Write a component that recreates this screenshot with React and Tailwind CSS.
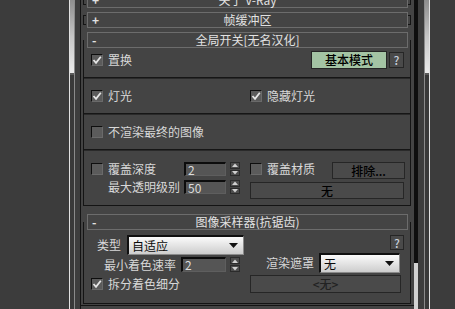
function Check({ on, className = "" }) {
  return (
    <span
      className={
        "flex h-[12px] w-[12px] shrink-0 items-center justify-center border border-t-[#0e0e0e] border-l-[#0e0e0e] border-b-[#6a6a6a] border-r-[#6a6a6a] bg-[#5b5b5b] " +
        className
      }
    >
      {on && (
        <svg width="10" height="10" viewBox="0 0 10 10">
          <path d="M1.5 5 L4 7.8 L8.8 1.8" fill="none" stroke="#e6e6e6" strokeWidth="1.8" />
        </svg>
      )}
    </span>
  );
}

function Field({ value, className = "" }) {
  return (
    <span
      className={
        "flex items-center border-t-2 border-l-2 border-b border-r border-t-[#0c0c0c] border-l-[#0c0c0c] border-b-[#5e5e5e] border-r-[#5e5e5e] bg-[#555555] pl-[2px] text-[12px] leading-none text-[#dcdcdc] " +
        className
      }
    >
      {value}
    </span>
  );
}

function Spin({ className = "" }) {
  return (
    <span className={"flex w-[10px] flex-col gap-[1px] " + className}>
      <span className="flex flex-1 items-center justify-center border border-[#2b2b2b] bg-[#4d4d4d]">
        <svg width="6" height="4" viewBox="0 0 6 4">
          <path d="M0 4 L3 0.5 L6 4 Z" fill="#d0d0d0" />
        </svg>
      </span>
      <span className="flex flex-1 items-center justify-center border border-[#2b2b2b] bg-[#4d4d4d]">
        <svg width="6" height="4" viewBox="0 0 6 4">
          <path d="M0 0 L3 3.5 L6 0 Z" fill="#d0d0d0" />
        </svg>
      </span>
    </span>
  );
}

function Btn({ children, className = "" }) {
  return (
    <span
      className={
        "flex items-center justify-center border border-[#262626] bg-[#4a4a4a] text-[12px] font-medium leading-none text-black " +
        className
      }
    >
      {children}
    </span>
  );
}

function Drop({ value, className = "" }) {
  return (
    <span
      className={
        "flex items-center border-t-2 border-l-2 border-b border-r border-t-[#101010] border-l-[#101010] border-b-[#8a8a8a] border-r-[#8a8a8a] bg-gradient-to-b from-[#fbfbfb] to-[#cdcdcd] pl-[3px] pr-[5px] text-[12px] leading-none text-[#0a0a0a] " +
        className
      }
    >
      <span className="flex-1">{value}</span>
      <svg width="9" height="5" viewBox="0 0 9 5">
        <path d="M0 0 L9 0 L4.5 5 Z" fill="#111" />
      </svg>
    </span>
  );
}

function Head({ sign, title }) {
  return (
    <div className="flex h-[16px] w-[321px] items-center border border-[#6c6c6c] bg-[#444444] text-[12px] leading-none text-[#e2e2e2]">
      <span className="w-[14px] pl-[4px] font-bold">{sign}</span>
      <span className="flex-1 pr-[14px] text-center">{title}</span>
    </div>
  );
}

function Closed({ title, className = "" }) {
  return (
    <div className={"ml-[2px] flex items-center " + className}>
      <span className="h-[10px] w-[3px] border-y border-l border-[#141414]" />
      <span className="w-[1px]" />
      <Head sign="+" title={title} />
      <span className="h-[10px] w-[3px] border-y border-r border-[#141414]" />
    </div>
  );
}

function Sep() {
  return <div className="h-[2px] border-t border-b border-t-[#161616] border-b-[#2a2a2a]" />;
}

function Thumb() {
  return (
    <div className="flex w-[4px] flex-col bg-[#393939]">
      <div className="h-[73px] bg-gradient-to-b from-[#8e8e8e] via-[#c6c6c6] to-[#ececec]" />
      <div className="h-[2px] bg-[#5a5a5a]" />
    </div>
  );
}

export default function App() {
  return (
    <div className="flex h-[309px] w-[455px] overflow-hidden bg-[#3c3c3c] font-['Noto_Sans_CJK_SC','Liberation_Sans',sans-serif] text-[12px] text-[#d8d8d8]">
      <div className="w-[69px] bg-[#3c3c3c]" />
      <div className="w-[1px] bg-[#e2e2e2]" />
      <Thumb />
      <div className="w-[1px] bg-[#8a8a8a]" />
      <div className="w-[5px] bg-[#3d3d3d]" />
      <div className="w-[1px] bg-[#141414]" />

      <div className="flex w-[333px] flex-col bg-[#444444]">
        <Closed title="关于 V-Ray" className="-mt-[8px]" />
        <Closed title="帧缓冲区" className="mt-[4px]" />

        <div className="ml-[2px] mt-[12px] w-[328px] border-x border-b border-[#141414] pb-[5px]">
          <div className="-mt-[8px] ml-[3px]">
            <Head sign="-" title="全局开关[无名汉化]" />
          </div>

          <div className="mt-[3px] flex h-[18px] items-center">
            <Check on className="ml-[7px]" />
            <span className="ml-[5px] leading-none">置换</span>
            <Btn className="ml-auto h-[18px] w-[76px] bg-[#a4c4a4]">基本模式</Btn>
            <Btn className="ml-[2px] h-[16px] w-[15px] !text-[#c8d0dc]">?</Btn>
            <span className="w-[6px]" />
          </div>
          <div className="mt-[8px]">
            <Sep />
          </div>

          <div className="mt-[8px] flex h-[18px] items-center">
            <div className="flex w-[166px] items-center">
              <Check on className="ml-[7px]" />
              <span className="ml-[5px] leading-none">灯光</span>
            </div>
            <Check on />
            <span className="ml-[5px] leading-none">隐藏灯光</span>
          </div>
          <div className="mt-[8px]">
            <Sep />
          </div>

          <div className="mt-[8px] flex h-[18px] items-center">
            <Check className="ml-[7px]" />
            <span className="ml-[5px] leading-none">不渲染最终的图像</span>
          </div>
          <div className="mt-[8px]">
            <Sep />
          </div>

          <div className="mt-[11px] flex h-[18px] items-start">
            <div className="flex w-[166px] items-start">
              <Check className="ml-[7px] mt-[1px]" />
              <span className="ml-[5px] leading-[14px]">覆盖深度</span>
              <Field value="2" className="ml-auto h-[14px] w-[42px]" />
              <Spin className="ml-[4px] h-[14px]" />
              <span className="w-[10px]" />
            </div>
            <Check className="mt-[1px]" />
            <span className="ml-[5px] leading-[14px]">覆盖材质</span>
            <Btn className="ml-auto h-[17px] w-[73px]">排除...</Btn>
            <span className="w-[5px]" />
          </div>
          <div className="flex h-[20px] items-start">
            <div className="flex w-[166px] items-start">
              <span className="flex-1 pr-[4px] text-right leading-[14px]">最大透明级别</span>
              <Field value="50" className="h-[14px] w-[42px]" />
              <Spin className="ml-[4px] h-[14px]" />
              <span className="w-[10px]" />
            </div>
            <Btn className="mt-[2px] h-[17px] w-[154px]">无</Btn>
          </div>
        </div>

        <div className="ml-[2px] mt-[16px] w-[328px] border-x border-b border-[#141414] pb-[10px]">
          <div className="-mt-[8px] ml-[3px]">
            <Head sign="-" title="图像采样器(抗锯齿)" />
          </div>

          <div className="mt-[5px] flex h-[18px] items-start">
            <span className="ml-[13px] leading-[20px]">类型</span>
            <Drop value="自适应" className="ml-[6px] h-[20px] w-[117px]" />
            <Btn className="ml-auto h-[15px] w-[14px] !text-[#c8d0dc]">?</Btn>
            <span className="w-[6px]" />
          </div>

          <div className="flex h-[20px] items-start">
            <div className="flex w-[166px] items-start">
              <span className="mt-[4px] flex-1 pr-[5px] text-right leading-[15px]">最小着色速率</span>
              <Field value="2" className="mt-[4px] h-[15px] w-[45px]" />
              <Spin className="ml-[4px] mt-[4px] h-[15px]" />
              <span className="w-[10px]" />
            </div>
            <span className="ml-[16px] leading-[20px]">渲染遮罩</span>
            <Drop value="无" className="ml-[5px] h-[20px] w-[81px]" />
          </div>

          <div className="mt-[2px] flex h-[18px] items-start">
            <div className="flex w-[166px] items-center pt-[3px]">
              <Check on className="ml-[7px]" />
              <span className="ml-[5px] leading-none">拆分着色细分</span>
            </div>
            <Btn className="h-[18px] w-[151px] !text-[#222]">&lt;无&gt;</Btn>
          </div>
        </div>
        <div className="mt-[1px] h-[1px] bg-[#141414]" />
      </div>

      <div className="flex w-[4px] flex-col bg-[#0e0e0e]">
        <div className="h-[263px]" />
        <div className="flex-1 bg-[#d2d2d2]" />
      </div>
      <div className="w-[6px] bg-[#3d3d3d]" />
      <div className="w-[1px] bg-[#8a8a8a]" />
      <Thumb />
      <div className="w-[1px] bg-[#e2e2e2]" />
      <div className="flex-1 bg-[#3c3c3c]" />
    </div>
  );
}
